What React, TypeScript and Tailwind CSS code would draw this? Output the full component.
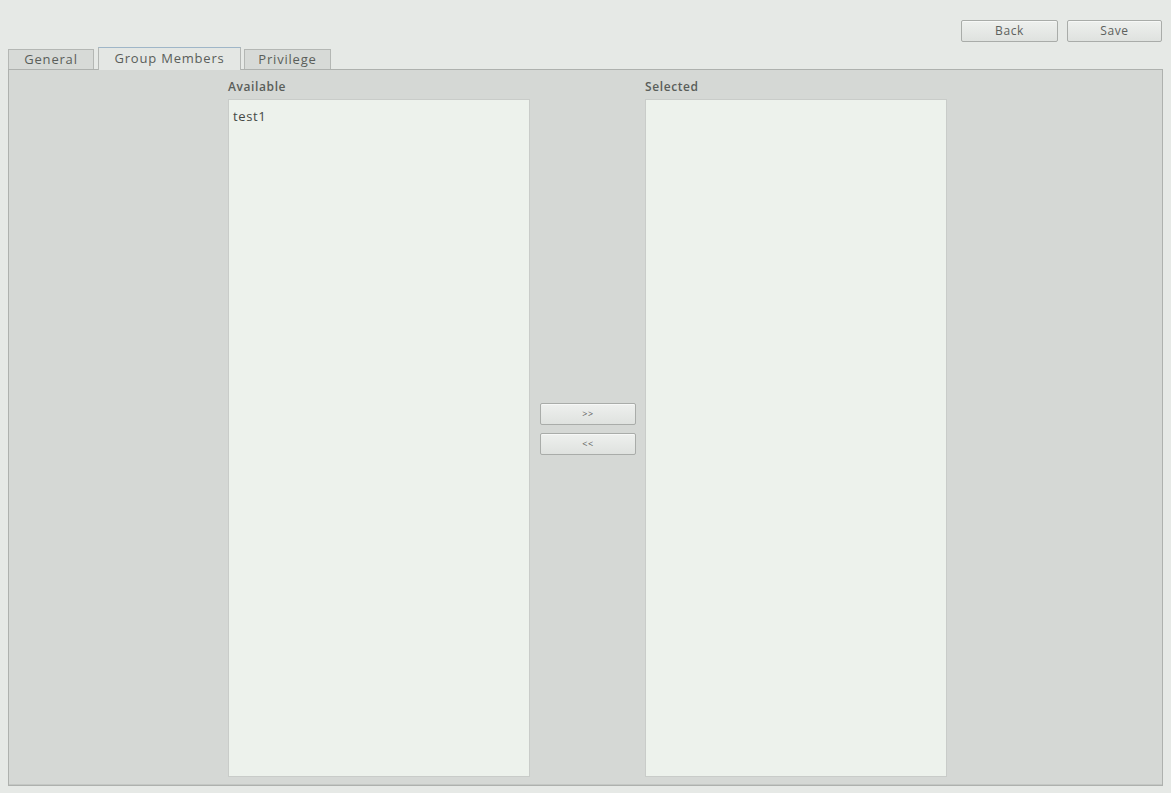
import React from "react";

const font = { fontFamily: '"Open Sans", "Noto Sans", sans-serif' };

function Btn({ label, className = "" }: { label: string; className?: string }) {
  return (
    <button
      className={
        "flex h-[22px] items-center justify-center rounded-[2px] border border-[#a9aca9] bg-gradient-to-b from-[#eef0ee] to-[#dfe2df] tracking-[0.6px] text-[#5d615d] shadow-[inset_0_1px_0_#f7f8f7] " +
        className
      }
    >
      {label}
    </button>
  );
}

export default function App() {
  return (
    <div className="flex h-[793px] w-full flex-col bg-[#e6e9e6]" style={font}>
      <div className="flex justify-end gap-[9px] pr-[9px] pt-[20px]">
        <Btn label="Back" className="w-[97px] text-[12px]" />
        <Btn label="Save" className="w-[95px] text-[12px]" />
      </div>
      <div className="mt-[5px] flex items-end pl-[8px]">
        <div className="flex h-[20px] w-[86px] items-center justify-center border border-b-0 border-[#b4b7b4] bg-[#d7dad7] text-[13px] tracking-[0.8px] text-[#5a5e5a]">
          General
        </div>
        <div className="relative z-10 -mb-px ml-[4px] flex h-[23px] w-[143px] items-center justify-center border border-b-0 border-[#b4b7b4] border-t-[#9fb6c8] bg-[#e4e7e4] text-[13px] tracking-[0.8px] text-[#5a5e5a]">
          Group Members
        </div>
        <div className="ml-[3px] flex h-[20px] w-[87px] items-center justify-center border border-b-0 border-[#b4b7b4] bg-[#d7dad7] text-[13px] tracking-[0.8px] text-[#5a5e5a]">
          Privilege
        </div>
      </div>
      <div className="mx-[8px] mb-[7px] flex flex-1 border border-[#aeb1ae] bg-[#d5d8d5] pl-[219px] shadow-[inset_0_-1px_0_#c4c7c4]">
        <div className="flex w-[302px] flex-col">
          <div className="flex h-[29px] items-end pb-[3px] text-[12px] font-semibold tracking-[0.6px] text-[#5a5e5a]">
            Available
          </div>
          <div className="mb-[8px] flex-1 border border-[#c9ccc9] bg-[#edf2ec] px-[4px] pt-[7px] text-[13px] tracking-[0.6px] text-[#454945]">
            test1
          </div>
        </div>
        <div className="flex w-[115px] flex-col items-center justify-center gap-[8px] pl-[1px] pt-[2px]">
          <Btn label=">>" className="w-[96px] text-[9px]" />
          <Btn label="<<" className="w-[96px] text-[9px]" />
        </div>
        <div className="flex w-[302px] flex-col">
          <div className="flex h-[29px] items-end pb-[3px] text-[12px] font-semibold tracking-[0.6px] text-[#5a5e5a]">
            Selected
          </div>
          <div className="mb-[8px] flex-1 border border-[#c9ccc9] bg-[#edf2ec]" />
        </div>
      </div>
    </div>
  );
}
